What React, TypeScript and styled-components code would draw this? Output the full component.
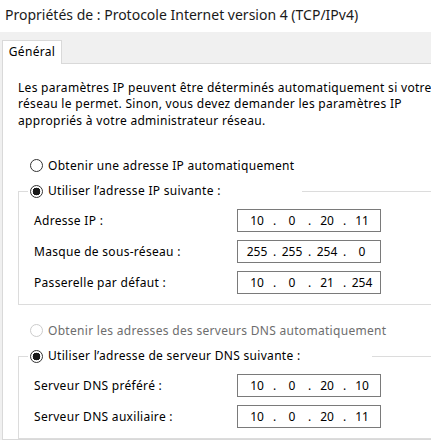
import React, {FC} from 'react';
import styled, {createGlobalStyle} from "styled-components";

const GlobalStyle = createGlobalStyle`
    html, body {
        margin: 0;
        padding: 0;
        background: #ffffff;
    }
    body {
        width: 431px;
        height: 440px;
        overflow: hidden;
        font-family: "Noto Sans", "Liberation Sans", sans-serif;
        color: #000000;
    }
`

const Window = styled.div`
    display: flex;
    flex-direction: column;
    width: 431px;
    height: 440px;
`

const TitleBar = styled.div`
    height: 33px;
    padding-left: 5px;
    font-size: 14px;
    line-height: 30px;
    color: #1a1a1a;
    white-space: nowrap;
`

const Body = styled.div`
    flex: 1;
    display: flex;
    flex-direction: column;
    background: #f0f0f0;
    padding-top: 8px;
    letter-spacing: 0.3px;
`

const TabStrip = styled.div`
    display: flex;
    padding-left: 2px;
`

const Tab = styled.div`
    position: relative;
    z-index: 1;
    width: 60px;
    height: 24px;
    margin-bottom: -1px;
    box-sizing: border-box;
    background: #ffffff;
    border: 1px solid #d9d9d9;
    border-bottom: none;
    font-size: 12px;
    line-height: 22px;
    text-align: center;
`

const Panel = styled.div`
    flex: 1;
    margin-left: 2px;
    background: #ffffff;
    border: 1px solid #d9d9d9;
    border-right: none;
    padding: 16px 0 0 15px;
    display: flex;
    flex-direction: column;
`

const Intro = styled.p`
    margin: 0;
    font-size: 12px;
    line-height: 16.4px;
    white-space: nowrap;
`

const RadioRow = styled.div<{ $disabled?: boolean; $top?: number }>`
    display: flex;
    align-items: center;
    gap: 5px;
    height: 16px;
    padding-left: 12px;
    margin-top: ${p => p.$top ?? 0}px;
    font-size: 12px;
    white-space: nowrap;
    color: ${p => p.$disabled ? '#6d6d6d' : '#000000'};
`

const RadioDot = styled.span<{ $checked?: boolean; $disabled?: boolean }>`
    flex: none;
    width: 13px;
    height: 13px;
    box-sizing: border-box;
    border-radius: 50%;
    border: 1px solid ${p => p.$disabled ? '#cccccc' : '#333333'};
    background: ${p => p.$checked
        ? 'radial-gradient(circle, #1a1a1a 0 3.6px, #ffffff 4.1px)'
        : '#ffffff'};
`

const Group = styled.fieldset`
    margin: 10px 0 0 0;
    padding: 0 0 10px 0;
    border: 1px solid #dcdcdc;
    border-right: none;
    min-width: 0;
`

const Legend = styled.legend<{ $width: number }>`
    box-sizing: border-box;
    width: ${p => p.$width}px;
    margin-left: 9px;
    padding: 0 0 0 2px;
    display: flex;
    align-items: center;
    gap: 5px;
    height: 16px;
    font-size: 12px;
    line-height: 16px;
    white-space: nowrap;
`

const Rows = styled.div`
    display: flex;
    flex-direction: column;
    gap: 8px;
    margin-top: 10px;
    padding-left: 15px;
`

const FieldRow = styled.div`
    display: grid;
    grid-template-columns: 203px 144px;
    align-items: center;
    font-size: 12px;
`

const Label = styled.span`
    white-space: nowrap;
`

const IpBox = styled.div`
    display: flex;
    align-items: center;
    height: 23px;
    box-sizing: border-box;
    border: 1px solid #7a7a7a;
    padding: 0 5px 0 6px;
    font-size: 12px;
    line-height: 16px;
    letter-spacing: 0;
`

const Octet = styled.span`
    width: 26px;
    text-align: center;
`

const Dot = styled.span`
    width: 9px;
    text-align: center;
`

interface IpProps {
    value: string;
}

const IpField: FC<IpProps> = ({value}) => {
    const parts = value.split('.')
    return (
        <IpBox>
            {parts.map((p, i) => (
                <React.Fragment key={i}>
                    {i > 0 && <Dot>.</Dot>}
                    <Octet>{p}</Octet>
                </React.Fragment>
            ))}
        </IpBox>
    )
}

const ipRows = [
    {label: "Adresse IP :", value: "10.0.20.11"},
    {label: "Masque de sous-réseau :", value: "255.255.254.0"},
    {label: "Passerelle par défaut :", value: "10.0.21.254"},
]

const dnsRows = [
    {label: "Serveur DNS préféré :", value: "10.0.20.10"},
    {label: "Serveur DNS auxiliaire :", value: "10.0.20.11"},
]

const App: FC = () => {
    return (
        <>
            <GlobalStyle/>
            <Window>
                <TitleBar>Propriétés de : Protocole Internet version 4 (TCP/IPv4)</TitleBar>
                <Body>
                    <TabStrip>
                        <Tab>Général</Tab>
                    </TabStrip>
                    <Panel>
                        <Intro>
                            Les paramètres IP peuvent être déterminés automatiquement si votre<br/>
                            réseau le permet. Sinon, vous devez demander les paramètres IP<br/>
                            appropriés à votre administrateur réseau.
                        </Intro>

                        <RadioRow $top={28}>
                            <RadioDot/>
                            Obtenir une adresse IP automatiquement
                        </RadioRow>
                        <Group>
                            <Legend $width={274}>
                                <RadioDot $checked/>
                                Utiliser l’adresse IP suivante :
                            </Legend>
                            <Rows>
                                {ipRows.map(r => (
                                    <FieldRow key={r.label}>
                                        <Label>{r.label}</Label>
                                        <IpField value={r.value}/>
                                    </FieldRow>
                                ))}
                            </Rows>
                        </Group>

                        <RadioRow $top={17} $disabled>
                            <RadioDot $disabled/>
                            Obtenir les adresses des serveurs DNS automatiquement
                        </RadioRow>
                        <Group>
                            <Legend $width={344}>
                                <RadioDot $checked/>
                                Utiliser l’adresse de serveur DNS suivante :
                            </Legend>
                            <Rows>
                                {dnsRows.map(r => (
                                    <FieldRow key={r.label}>
                                        <Label>{r.label}</Label>
                                        <IpField value={r.value}/>
                                    </FieldRow>
                                ))}
                            </Rows>
                        </Group>
                    </Panel>
                </Body>
            </Window>
        </>
    );
};

export default App;
